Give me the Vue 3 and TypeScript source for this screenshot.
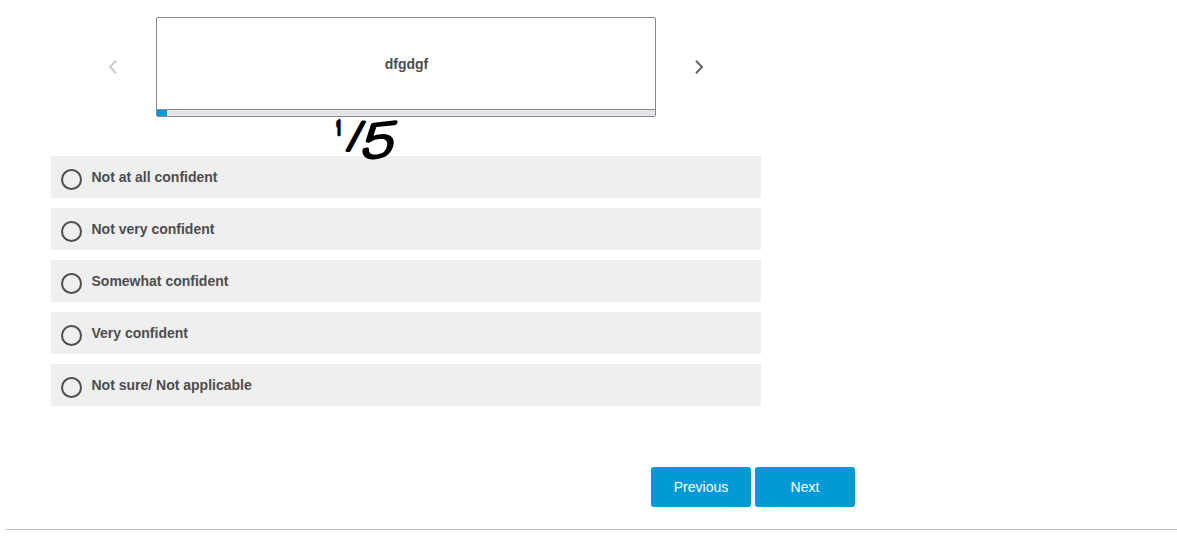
<template>
  <main class="survey">
    <section class="carousel">
      <button type="button" class="arrow" :disabled="current === 0" aria-label="Previous statement" @click="current--">
        <svg width="10" height="16" viewBox="0 0 10 16"><path d="M8 1.8 2 8l6 6.2" /></svg>
      </button>
      <div class="card">
        <div class="card-text">dfgdgf</div>
        <div class="progress">
          <div class="progress-bar" :style="{ width: `${progress}%` }" />
        </div>
        <svg class="note" width="80" height="64" viewBox="0 0 80 64">
          <text class="note-one" transform="translate(4.6 17.6) scale(0.42 1)">1</text>
          <text class="note-slash" transform="translate(15.4 31.4) skewX(-13)">/</text>
          <text class="note-five" transform="translate(25.5 43) rotate(-6) skewX(-17) scale(1.38 1)">5</text>
        </svg>
      </div>
      <button type="button" class="arrow" :disabled="current === total - 1" aria-label="Next statement" @click="current++">
        <svg width="10" height="16" viewBox="0 0 10 16"><path d="m2 1.8 6 6.2-6 6.2" /></svg>
      </button>
    </section>

    <div class="options" role="radiogroup">
      <label v-for="option in options" :key="option" class="option">
        <input v-model="answer" type="radio" name="confidence" :value="option" />
        <span>{{ option }}</span>
      </label>
    </div>

    <div class="actions">
      <button type="button" class="btn">Previous</button>
      <button type="button" class="btn">Next</button>
    </div>
    <hr />
  </main>
</template>

<script setup lang="ts">
  import { computed, ref } from 'vue'

  const options: string[] = [
    'Not at all confident',
    'Not very confident',
    'Somewhat confident',
    'Very confident',
    'Not sure/ Not applicable'
  ]

  const total = 5
  const current = ref(0)
  const answer = ref('')

  // the bar starts with a small sliver so it is never empty
  const progress = computed(() => 2 + (current.value / total) * 100)
</script>

<style>
  body {
    background: #ffffff;
    overflow: hidden;
  }
</style>

<style scoped>
  .survey {
    box-sizing: border-box;
    height: 537px;
    padding: 17px 0 0 51px;
    font-family: 'Liberation Sans', Arial, sans-serif;
    color: #4d4d4d;
  }

  .carousel {
    display: flex;
    align-items: center;
    justify-content: space-between;
    width: 596px;
    margin-left: 57px;
  }

  .arrow {
    display: flex;
    padding: 0;
    border: 0;
    background: none;
    color: #666666;
  }

  .arrow:disabled {
    color: #cccccc;
  }

  .arrow path {
    fill: none;
    stroke: currentColor;
    stroke-width: 2;
  }

  .card {
    position: relative;
    box-sizing: border-box;
    display: flex;
    flex-direction: column;
    width: 500px;
    height: 100px;
    border: 1px solid #85888d;
    border-radius: 2px;
  }

  .card-text {
    flex: 1;
    display: flex;
    align-items: center;
    justify-content: center;
    padding-left: 1px;
    font-size: 14px;
    font-weight: bold;
  }

  .progress {
    height: 6px;
    border-top: 1px solid #85888d;
    background: #e4e5e8;
  }

  .progress-bar {
    height: 100%;
    background: #0099d8;
  }

  /* pen note, hangs below the card */
  .note {
    position: absolute;
    top: 98px;
    left: 175px;
    overflow: visible;
    font-family: Roboto, sans-serif;
    font-weight: 100;
    stroke: #000000;
    stroke-width: 3.5;
    stroke-linejoin: round;
  }

  .note-one {
    font-size: 18px;
    font-weight: 900;
    stroke-width: 4.5;
  }

  .note-slash {
    font-family: 'DejaVu Sans', sans-serif;
    font-weight: 200;
    font-size: 34px;
  }

  .note-five {
    font-size: 46px;
  }

  .options {
    display: flex;
    flex-direction: column;
    gap: 10px;
    width: 710px;
    margin-top: 39px;
  }

  .option {
    box-sizing: border-box;
    display: flex;
    height: 42px;
    padding: 13px 10px 0;
    background: #efefef;
    font-size: 14px;
    font-weight: bold;
    line-height: 16px;
  }

  .option input {
    appearance: none;
    box-sizing: border-box;
    flex: none;
    width: 21px;
    height: 21px;
    margin: 0 9.5px 0 0;
    border: 2px solid #4d4d4d;
    border-radius: 50%;
  }

  .option input:checked {
    background: #0099d8;
  }

  .actions {
    display: flex;
    gap: 4px;
    margin: 61px 0 0 600px;
  }

  .btn {
    width: 100px;
    height: 40px;
    padding: 0;
    border: 0;
    border-radius: 3px;
    background: #0099d8;
    color: #ffffff;
    font: 14px 'Liberation Sans', Arial, sans-serif;
  }

  hr {
    height: 1px;
    margin: 22px 0 0 -45px;
    border: 0;
    background: #c0c0c0;
  }
</style>
